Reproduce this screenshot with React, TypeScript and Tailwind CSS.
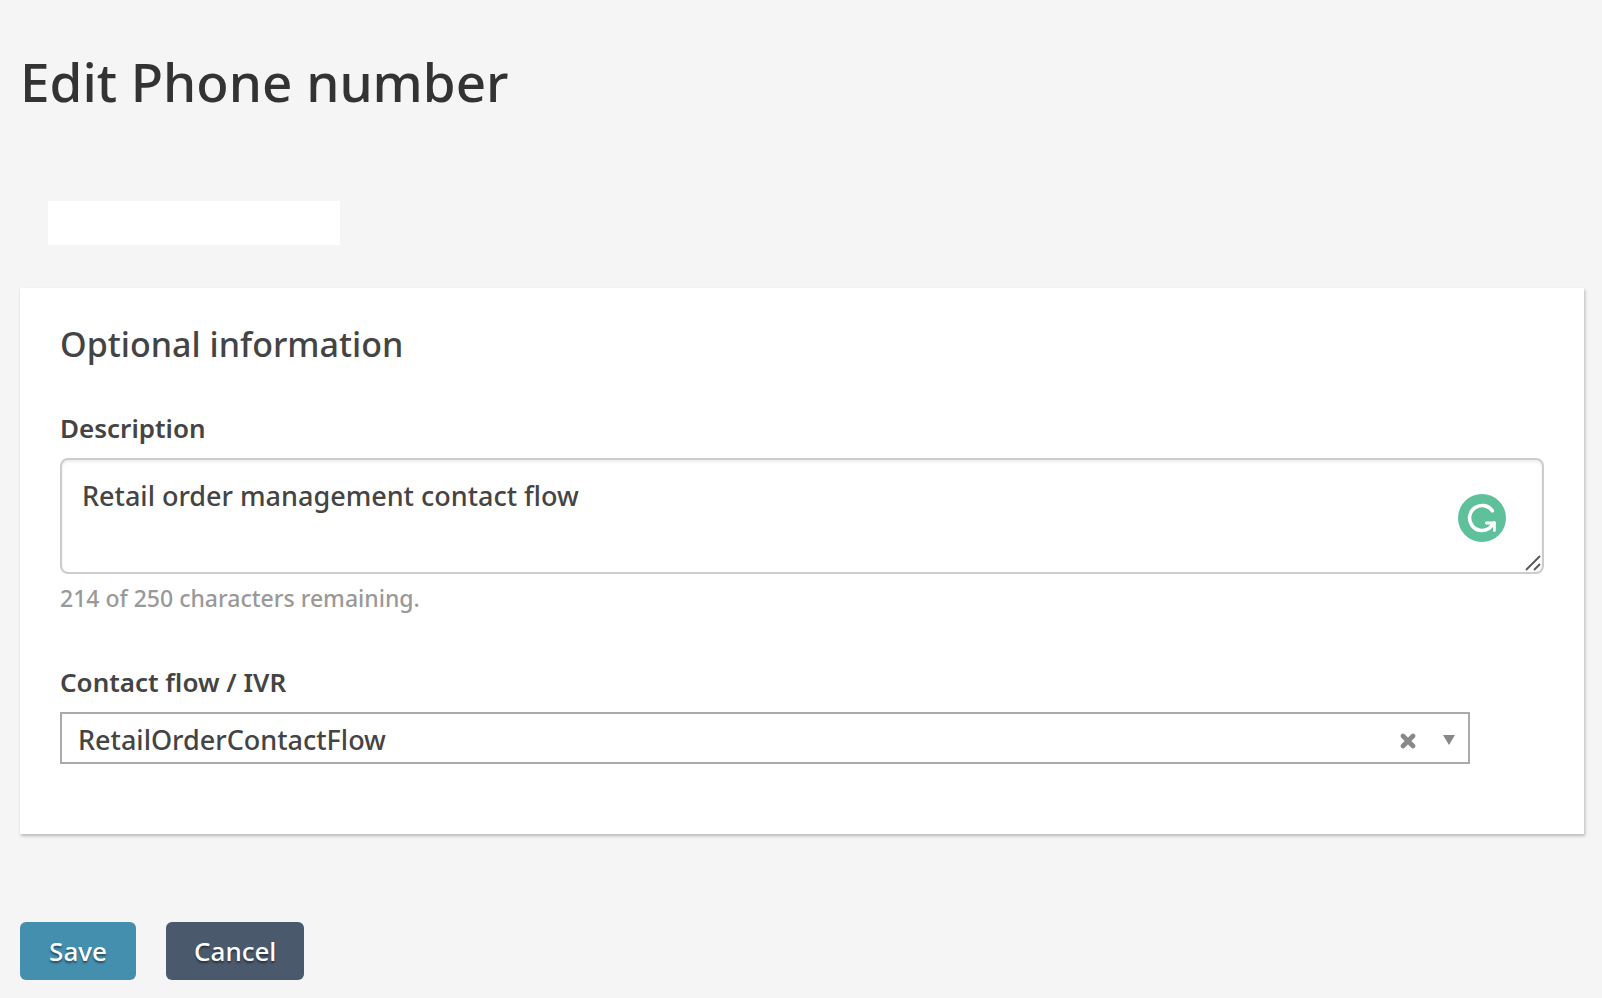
import { useState } from "react";

const MAX_LENGTH = 250;

const flows = ["RetailOrderContactFlow"];

export default function App() {
  const [description, setDescription] = useState(
    "Retail order management contact flow"
  );
  const [flow, setFlow] = useState(flows[0]);

  return (
    <main className="min-h-screen bg-[#f5f5f5] pb-4 pl-5 pr-[18px] pt-11 font-['Noto_Sans','Open_Sans',sans-serif] text-[#444]">
      <h1 className="text-[53px] font-medium leading-[76px] text-[#333]">
        Edit Phone number
      </h1>

      {/* phone number is hidden */}
      <div className="ml-7 mt-[81px] h-11 w-[292px] bg-white" />

      <form onSubmit={(e) => e.preventDefault()}>
        <section className="mt-[43px] bg-white px-10 pb-[70px] pt-8 shadow-[1px_2px_3px_rgba(0,0,0,0.25)]">
          <h2 className="text-[34px] font-medium leading-[48px]">
            Optional information
          </h2>

          <label
            htmlFor="description"
            className="mt-10 block text-[26px] font-semibold leading-10"
          >
            Description
          </label>
          <div className="relative mt-[10px]">
            <textarea
              id="description"
              maxLength={MAX_LENGTH}
              value={description}
              onChange={(e) => setDescription(e.target.value)}
              className="block h-[116px] w-full resize-none rounded-lg border-2 border-[#ccc] bg-white px-5 py-4 text-[27px] font-medium leading-10 shadow-[inset_0_2px_3px_rgba(0,0,0,0.08)] outline-none"
            />
            <GrammarBadge />
            <ResizeHandle />
          </div>
          <p className="mt-2 text-[23px] font-medium leading-8 text-[#999]">
            {MAX_LENGTH - description.length} of {MAX_LENGTH} characters
            remaining.
          </p>

          <label
            htmlFor="flow"
            className="mt-12 block text-[26px] font-semibold leading-10"
          >
            Contact flow / IVR
          </label>
          <div className="relative mt-[10px] w-[95%]">
            <select
              id="flow"
              value={flow}
              onChange={(e) => setFlow(e.target.value)}
              className="block h-[52px] w-full appearance-none border-2 border-[#aaa] bg-white px-4 pt-1 text-[27px] font-medium outline-none"
            >
              <option value="" />
              {flows.map((name) => (
                <option key={name} value={name}>
                  {name}
                </option>
              ))}
            </select>
            <div className="pointer-events-none absolute inset-y-0 right-[15px] flex items-center gap-[27px] pt-1">
              <button
                type="button"
                aria-label="Clear contact flow"
                onClick={() => setFlow("")}
                className="pointer-events-auto pt-0.5"
              >
                <svg width="16" height="16" viewBox="0 0 16 16">
                  <path
                    d="M3 3l10 10M13 3L3 13"
                    stroke="#888"
                    strokeWidth="4.6"
                    strokeLinecap="round"
                  />
                </svg>
              </button>
              <svg width="12" height="10" viewBox="0 0 12 10">
                <path d="M0 0h12L6 10z" fill="#888" />
              </svg>
            </div>
          </div>
        </section>

        <div className="mt-[88px] flex gap-[30px]">
          <button
            type="submit"
            className="h-[58px] min-w-[116px] rounded-md bg-[#448fae] px-7 text-[26px] font-medium text-white [text-shadow:0_2px_2px_rgba(0,0,0,0.45)]"
          >
            Save
          </button>
          <button
            type="button"
            className="h-[58px] min-w-[116px] rounded-md bg-[#4a596c] px-7 text-[26px] font-medium text-white [text-shadow:0_2px_2px_rgba(0,0,0,0.45)]"
          >
            Cancel
          </button>
        </div>
      </form>
    </main>
  );
}

function GrammarBadge() {
  return (
    <svg
      className="absolute right-[38px] top-9"
      width="48"
      height="48"
      viewBox="0 0 48 48"
    >
      <circle cx="24" cy="24" r="24" fill="#5fc09c" />
      <g
        fill="none"
        stroke="#fff"
        strokeLinecap="round"
        strokeLinejoin="round"
      >
        <path
          d="M34.3 16.8A12.5 12.5 0 1 0 31.2 34.2L36.2 29"
          strokeWidth="3.6"
        />
        <path d="M28.4 29h8v7.6" strokeWidth="2.8" />
      </g>
    </svg>
  );
}

function ResizeHandle() {
  return (
    <svg
      className="pointer-events-none absolute bottom-[3px] right-[3px]"
      width="16"
      height="16"
      viewBox="0 0 16 16"
    >
      <path d="M1 15L15 1M9 15l6-6" stroke="#555" strokeWidth="1.8" />
    </svg>
  );
}
